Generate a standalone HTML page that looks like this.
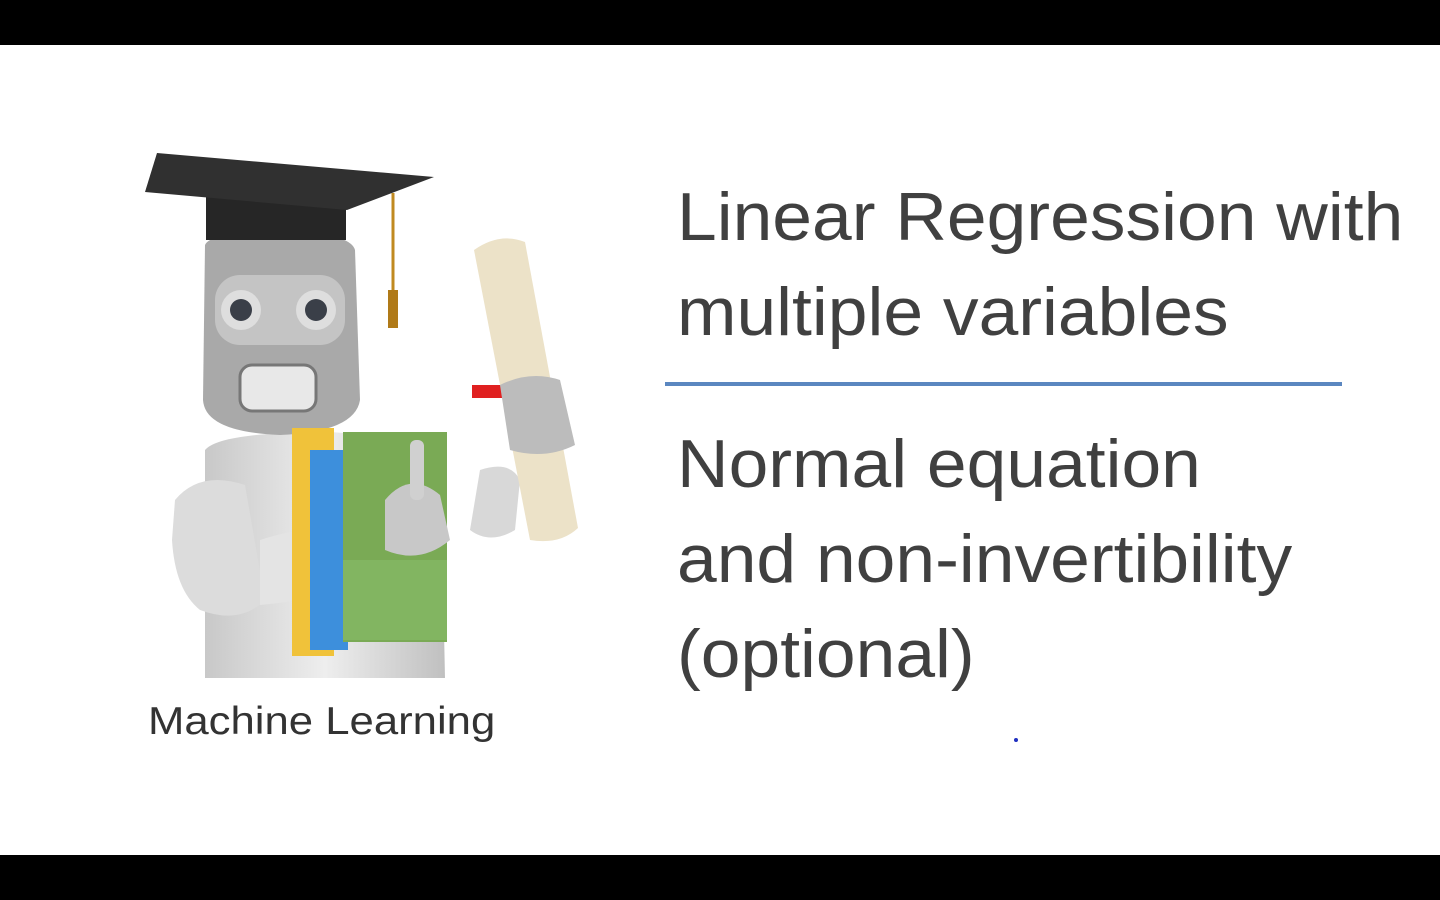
<!DOCTYPE html>
<html><head><meta charset="utf-8"><style>
body{margin:0;width:1440px;height:900px;background:#000;overflow:hidden;position:relative;font-family:"Liberation Sans",sans-serif}
.slide{position:absolute;left:0;top:45px;width:1440px;height:810px;background:#fff}
.t{position:absolute;left:677px;color:#404040;font-size:68px;white-space:nowrap;transform-origin:0 0;transform:scaleX(1.05)}
.ml{position:absolute;left:148px;top:700px;color:#333;font-size:39px;white-space:nowrap;transform-origin:0 0;transform:scaleX(1.12)}
.rule{position:absolute;left:665px;top:382px;width:677px;height:4px;background:#5b87c0}
</style></head><body>
<div class="slide"></div>
<div class="t" style="top:178px">Linear Regression with</div>
<div class="t" style="top:273px">multiple variables</div>
<div class="rule"></div>
<div class="t" style="top:425px">Normal equation</div>
<div class="t" style="top:520px">and non-invertibility</div>
<div class="t" style="top:615px">(optional)</div>
<div class="ml">Machine Learning</div>
<svg style="position:absolute;left:0;top:0" width="1440" height="900">
<defs>
<linearGradient id="g" x1="0" x2="1"><stop offset="0" stop-color="#c8c8c8"/><stop offset=".5" stop-color="#eeeeee"/><stop offset="1" stop-color="#c0c0c0"/></linearGradient>
</defs>
<path d="M205 450 Q220 432 330 432 L440 440 L445 678 L205 678 Z" fill="url(#g)"/>
<path d="M175 500 Q200 470 245 485 L265 600 Q240 625 200 610 Q175 590 172 540 Z" fill="#dcdcdc"/>
<path d="M260 540 Q320 520 370 535 L380 575 Q320 600 260 605 Z" fill="#e4e4e4"/>
<path d="M480 470 Q510 460 520 480 L515 530 Q490 545 470 530 Z" fill="#d8d8d8"/>
<path d="M205 245 Q210 232 280 232 Q350 232 355 250 L360 400 Q355 432 280 435 Q205 432 203 400 Z" fill="#a9a9a9"/>
<rect x="215" y="275" width="130" height="70" rx="25" fill="#c4c4c4"/>
<circle cx="241" cy="310" r="20" fill="#dedede"/><circle cx="241" cy="310" r="11" fill="#3a3f48"/>
<circle cx="316" cy="310" r="20" fill="#dedede"/><circle cx="316" cy="310" r="11" fill="#3a3f48"/>
<rect x="240" y="365" width="76" height="46" rx="12" fill="#e8e8e8" stroke="#777" stroke-width="3"/>
<rect x="206" y="195" width="140" height="45" fill="#262626"/>
<polygon points="145,192 157,153 434,177 347,210" fill="#303030"/>
<line x1="393" y1="193" x2="393" y2="300" stroke="#c08a20" stroke-width="3"/>
<rect x="388" y="290" width="10" height="38" fill="#b07a18"/>
<rect x="292" y="428" width="42" height="228" fill="#f0c23a"/>
<rect x="310" y="450" width="38" height="200" fill="#3d8fdc"/>
<rect x="343" y="432" width="104" height="210" fill="#7aaa55"/>
<rect x="343" y="560" width="104" height="80" fill="#82b561"/>
<path d="M385 500 Q410 470 440 495 L450 540 Q420 565 385 550 Z" fill="#c8c8c8"/>
<rect x="410" y="440" width="14" height="60" rx="6" fill="#d0d0d0"/>
<path d="M474 250 Q500 232 525 242 L578 528 Q560 545 530 540 Z" fill="#ece2c8"/>
<rect x="472" y="385" width="40" height="13" fill="#e02020"/>
<path d="M500 385 Q530 370 560 380 L575 445 Q545 460 510 450 Z" fill="#bcbcbc"/>
<circle cx="1016" cy="740" r="2" fill="#2030c0"/>
</svg>
</body></html>
